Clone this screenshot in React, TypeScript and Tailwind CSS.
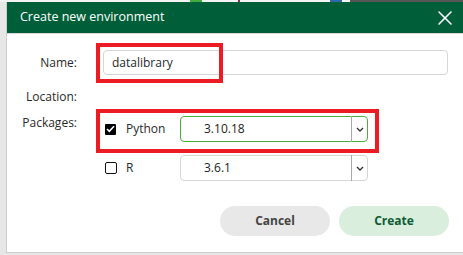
import { X } from "lucide-react";

const Chevron = () => (
  <svg width="8" height="5" viewBox="0 0 8 5" className="text-[#333]">
    <path d="M1 1l3 3 3-3" fill="none" stroke="currentColor" strokeWidth="1.3" />
  </svg>
);

interface SelectProps {
  value: string;
  active?: boolean;
}
const VersionSelect = ({ value, active }: SelectProps) => (
  <div
    className={`flex h-[26px] w-[188px] items-stretch rounded-[4px] border ${
      active ? "border-[#4caf3c]" : "border-[#d6d6d6]"
    }`}
  >
    <div className="flex flex-1 items-center pl-[23px] text-[12px] text-[#222]">{value}</div>
    <div className="my-[-1px] w-px bg-[#a8a8a8]" />
    <div className="flex w-[15px] items-center justify-center">
      <Chevron />
    </div>
  </div>
);

export default function App() {
  return (
    <div
      className="relative h-[255px] w-[463px] overflow-hidden bg-[#e7e7e7]"
      style={{ fontFamily: '"Open Sans", "Noto Sans", sans-serif' }}
    >
      <div className="flex h-[2px] bg-[#f3f3f3]">
        <div className="ml-[190px] w-[12px] bg-[#3fae3a]" />
        <div className="ml-[36px] w-[2px] bg-[#8a2d5a]" />
        <div className="ml-[90px] w-[12px] bg-[#2b6ca8]" />
        <div className="ml-[8px] flex-1 bg-[#555]" />
      </div>
      <div className="ml-[6px] h-[251px] w-[470px] border-b border-l border-[#cdcdcd] bg-white">
        <header className="flex h-[32px] items-center justify-between border-b border-[#d8d8d8] bg-[#005f38] pl-[13px] pr-[19px] text-[12.5px] text-white">
          <span>Create new environment</span>
          <X size={24} strokeWidth={1.6} />
        </header>
        <div className="grid grid-cols-[70px_auto] gap-x-[26px] pt-[16px] text-[12px] text-[#2a2a2a]">
          <div className="flex h-[25px] items-center justify-end">Name:</div>
          <div className="flex h-[25px] w-[345px] items-center rounded-[4px] border border-[#d6d6d6] pl-[8px]">
            datalibrary
          </div>

          <div className="mt-[13px] flex h-[18px] items-center justify-end">Location:</div>
          <div className="mt-[13px] h-[18px]" />

          <div className="mt-[8px] flex h-[18px] items-center justify-end">Packages:</div>
          <div className="row-span-2 mt-[10px] flex flex-col gap-[13px]">
            <div className="flex items-center">
              <div className="ml-[2px] flex h-[11px] w-[11px] items-center justify-center rounded-[1px] bg-black">
                <svg width="9" height="8" viewBox="0 0 9 8">
                  <path d="M1 4l2.3 2.3L8 1.3" fill="none" stroke="white" strokeWidth="1.6" />
                </svg>
              </div>
              <span className="ml-[10px] w-[54px]">Python</span>
              <VersionSelect value="3.10.18" active />
            </div>
            <div className="flex items-center">
              <div className="ml-[2px] h-[12px] w-[12px] rounded-[2px] border-[1.5px] border-[#111]" />
              <span className="ml-[9px] w-[54px]">R</span>
              <VersionSelect value="3.6.1" />
            </div>
          </div>
          <div />
        </div>
        <div className="mt-[25px] flex w-[442px] justify-end gap-[9px] text-[12px] font-bold">
          <button className="h-[30px] w-[110px] rounded-full bg-[#e8e8e8] text-[#444]">Cancel</button>
          <button className="h-[30px] w-[110px] rounded-full bg-[#d9eedc] text-[#0f5a33]">Create</button>
        </div>
      </div>
      <div className="absolute left-[96px] top-[43px] h-[40px] w-[127px] border-4 border-[#ec1c24]" />
      <div className="absolute left-[96px] top-[109px] h-[44px] w-[283px] border-4 border-[#ec1c24]" />
    </div>
  );
}
